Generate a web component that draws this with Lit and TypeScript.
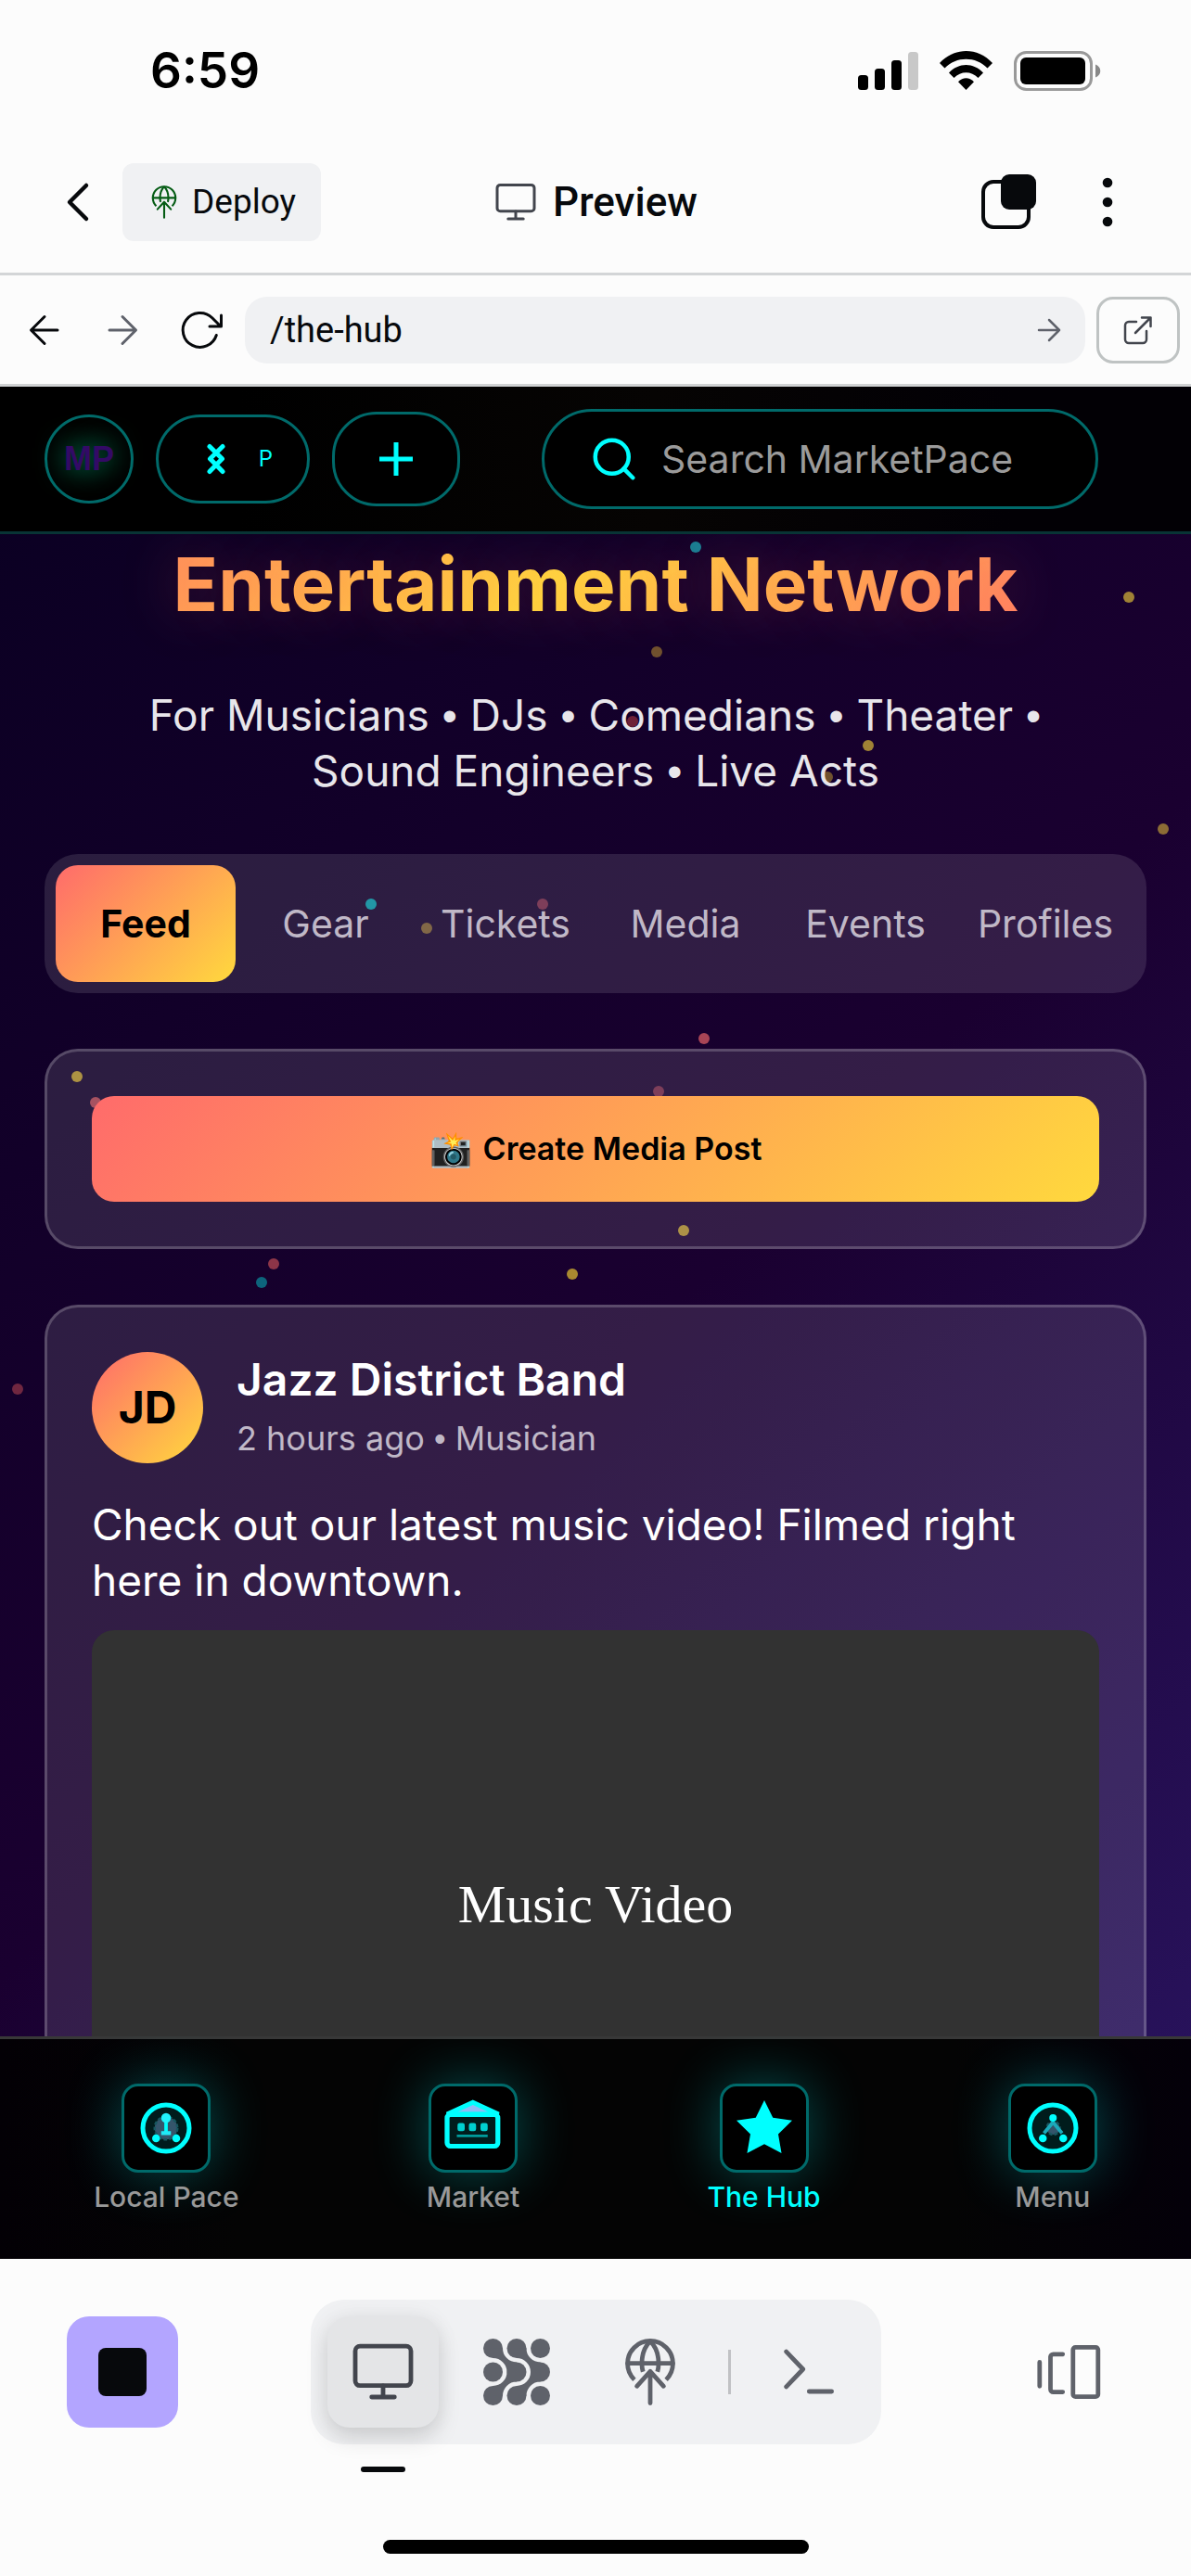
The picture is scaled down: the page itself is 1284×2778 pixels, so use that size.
import { LitElement, html, svg, css } from "lit";
import { customElement, state } from "lit/decorators.js";
import { classMap } from "lit/directives/class-map.js";

const base = css`
  :host,
  *,
  *::before,
  *::after {
    box-sizing: border-box;
  }
  button,
  input {
    margin: 0;
    padding: 0;
    border: 0;
    background: none;
    color: inherit;
    font: inherit;
  }
  a {
    color: inherit;
    text-decoration: none;
  }
  h1,
  h2,
  p {
    margin: 0;
  }
  svg {
    display: block;
    flex: none;
    overflow: visible;
  }
  .line {
    fill: none;
    stroke: currentColor;
    stroke-linecap: round;
    stroke-linejoin: round;
  }
`;

const monitor = (size: number, stroke: number) => html`
  <svg class="line" width=${size} height=${size} viewBox="0 0 24 24" stroke-width=${stroke} aria-hidden="true">
    <rect x="2" y="2.7" width="20" height="14.2" rx="1.7" />
    <path d="M12 17v4M7.9 21h8.2" />
  </svg>
`;

const globeUp = (size: number, stroke: number) => html`
  <svg class="line" width=${size} height=${size} viewBox="0 0 24 24" stroke-width=${stroke} aria-hidden="true">
    <path stroke-linecap="butt" d="M6.3 14.8A8.15 8.15 0 1 1 17.7 14.8" />
    <path d="M3.9 8.9h16.2" />
    <path stroke-linecap="butt" d="M12 .9C9.9 3 9 5.8 9 8.9c0 1 .1 2 .4 3M12 .9c2.1 2.1 3 4.9 3 8 0 1-.1 2-.4 3" />
    <path d="M12 23.2V11.8M7.2 17.1 12 11.8l4.8 5.3" />
  </svg>
`;

@customElement("device-status")
export class DeviceStatus extends LitElement {
  static styles = [
    base,
    css`
      :host {
        display: flex;
        align-items: center;
        justify-content: space-between;
        height: 141px;
        padding: 12px 96px 0 162px;
        color: #000;
        font: 600 53px/1 Inter, "Liberation Sans", sans-serif;
      }
      .icons {
        display: flex;
        align-items: center;
        gap: 23px;
      }
    `,
  ];

  render() {
    return html`
      <span>6:59</span>
      <div class="icons">
        <svg width="65" height="43" viewBox="0 0 65 43" role="img" aria-label="Signal">
          <rect x="0" y="26" width="11" height="16" rx="3.5" />
          <rect x="18" y="19" width="11" height="23" rx="3.5" />
          <rect x="36" y="10" width="11" height="32" rx="3.5" />
          <rect x="54" y="1" width="11" height="41" rx="3.5" fill="#c8c8c8" />
        </svg>
        <svg width="57" height="43" viewBox="0 0 57 43" role="img" aria-label="Wi-Fi">
          <path d="M0 13C16-4.3 41-4.3 57 13L51.5 18.5C39 5.5 18 5.5 5.5 18.5Z" />
          <path d="M10 23.5C20.5 12 36.5 12 47 23.5L41.5 29C34 21.2 23 21.2 15.5 29Z" />
          <path d="M20 33.3C25 28 32 28 37 33.3L28.5 42Z" />
        </svg>
        <svg width="95" height="43" viewBox="0 0 95 43" role="img" aria-label="Battery">
          <rect x="1.5" y="1.5" width="82" height="40" rx="12" fill="none" stroke="#999" stroke-width="3" />
          <rect x="7" y="7" width="70" height="29" rx="6" />
          <path d="M88 14.5c7 2.5 7 11.5 0 14Z" fill="#888" />
        </svg>
      </div>
    `;
  }
}

@customElement("browser-chrome")
export class BrowserChrome extends LitElement {
  static styles = [
    base,
    css`
      :host {
        display: block;
        color: #07090c;
        font: 400 37px/1 Roboto, "Noto Sans", sans-serif;
      }
      .title-bar {
        display: grid;
        grid-template-columns: 1fr auto 1fr;
        align-items: center;
        height: 156px;
        padding: 0 78px 0 60px;
        border-bottom: 3px solid #d3d5d7;
      }
      .group {
        display: flex;
        align-items: center;
        gap: 24px;
      }
      .group.end {
        justify-content: flex-end;
        gap: 64px;
      }
      .deploy {
        display: flex;
        align-items: center;
        gap: 12px;
        height: 84px;
        padding: 0 27px;
        border-radius: 12px;
        background: #f0f1f3;
      }
      .deploy svg {
        color: #055c14;
      }
      .title {
        display: flex;
        align-items: center;
        gap: 16px;
        padding-left: 18px;
        font-size: 44px;
        font-weight: 500;
      }
      .title svg {
        color: #42454d;
      }
      .address-bar {
        display: flex;
        align-items: center;
        gap: 12px;
        height: 120px;
        padding: 0 12px 0 24px;
        border-bottom: 3px solid #d0d2d3;
      }
      .nav {
        display: flex;
        gap: 36px;
        padding-right: 12px;
      }
      .muted {
        color: #5f626b;
      }
      .field {
        display: flex;
        flex: 1;
        align-items: center;
        height: 72px;
        padding: 0 24px 0 27px;
        border-radius: 24px;
        background: #f0f1f3;
      }
      .field input {
        flex: 1;
        min-width: 0;
        outline: none;
        font-size: 38px;
      }
      .open {
        display: grid;
        place-items: center;
        width: 90px;
        height: 72px;
        border: 3px solid #bfc3c3;
        border-radius: 18px;
        color: #42454d;
      }
    `,
  ];

  render() {
    return html`
      <header class="title-bar">
        <div class="group">
          <button aria-label="Back">
            <svg class="line" width="48" height="48" viewBox="0 0 48 48" stroke-width="4.5">
              <path d="M33 6 15 24l18 18" />
            </svg>
          </button>
          <button class="deploy">${globeUp(36, 1.4)} Deploy</button>
        </div>
        <div class="title">${monitor(48, 1.5)} <span>Preview</span></div>
        <div class="group end">
          <button aria-label="Tabs">
            <svg width="60" height="60" viewBox="0 0 60 60">
              <rect x="2" y="8" width="49" height="49" rx="11" fill="none" stroke="#07090c" stroke-width="4" />
              <rect x="21" y="0" width="38" height="38" rx="9" fill="#07090c" />
            </svg>
          </button>
          <button aria-label="More">
            <svg width="24" height="60" viewBox="0 0 24 60" fill="#07090c">
              <circle cx="12" cy="9" r="5.3" />
              <circle cx="12" cy="30" r="5.3" />
              <circle cx="12" cy="51" r="5.3" />
            </svg>
          </button>
        </div>
      </header>
      <div class="address-bar">
        <div class="nav">
          <button aria-label="Go back">
            <svg class="line" width="48" height="48" viewBox="0 0 48 48" stroke-width="3">
              <path d="M38 24H10M24 9.5 9.5 24 24 38.5" />
            </svg>
          </button>
          <button class="muted" aria-label="Go forward">
            <svg class="line" width="48" height="48" viewBox="0 0 48 48" stroke-width="3">
              <path d="M10 24h28M24 9.5 38.5 24 24 38.5" />
            </svg>
          </button>
          <button aria-label="Reload">
            <svg class="line" width="48" height="48" viewBox="0 0 48 48" stroke-width="3">
              <path d="M41.3 29.5A18.5 18.5 0 1 1 36.7 10.8L46 20M46.5 8v12H34" />
            </svg>
          </button>
        </div>
        <div class="field">
          <input type="text" aria-label="Address" .value=${"/the-hub"} />
          <button class="muted" aria-label="Go">
            <svg class="line" width="30" height="30" viewBox="0 0 30 30" stroke-width="2.5">
              <path d="M4 15h22M15 4l11 11-11 11" />
            </svg>
          </button>
        </div>
        <button class="open" aria-label="Open in new tab">
          <svg class="line" width="30" height="30" viewBox="0 0 30 30" stroke-width="2.5">
            <path d="M13 6H5a4 4 0 0 0-4 4v15a4 4 0 0 0 4 4h15a4 4 0 0 0 4-4v-9M19 1.5h9.5V11M28.5 1.5 12 18" />
          </svg>
        </button>
      </div>
    `;
  }
}

interface Particle {
  x: number;
  y: number;
  color: string;
}

// Offsets from the top left of the feed.
const particles: Particle[] = [
  { x: 744, y: 8, color: "#167f94" },
  { x: 1211, y: 62, color: "#a08235" },
  { x: 702, y: 121, color: "#70522f" },
  { x: 676, y: 196, color: "#6d2138" },
  { x: 930, y: 222, color: "#a08235" },
  { x: 886, y: 256, color: "#70522f" },
  { x: 1248, y: 312, color: "#8c6c35" },
  { x: 394, y: 393, color: "#068a9b" },
  { x: 579, y: 393, color: "#6e2645" },
  { x: 454, y: 419, color: "#715430" },
  { x: 753, y: 538, color: "#a84556" },
  { x: 77, y: 579, color: "#a3842b" },
  { x: 97, y: 607, color: "#9b3c4d" },
  { x: 704, y: 595, color: "#6e2645" },
  { x: 731, y: 745, color: "#a38430" },
  { x: 289, y: 781, color: "#8d3548" },
  { x: 276, y: 801, color: "#0d647c" },
  { x: 611, y: 792, color: "#a98930" },
  { x: 13, y: 916, color: "#702740" },
];

const tabs = ["Feed", "Gear", "Tickets", "Media", "Events", "Profiles"];

const audience = ["For Musicians", "DJs", "Comedians", "Theater", "Sound Engineers", "Live Acts"];

const navItems = [
  {
    label: "Local Pace",
    size: 60,
    art: svg`
      <circle cx="12" cy="12" r="10" fill="#001c1c" stroke="#0ff" stroke-width="2" />
      <circle cx="12" cy="12" r="4.9" fill="#34556b" stroke="#17565f" stroke-width="1" stroke-dasharray="1.5 .9" />
      <path d="M12 9v5" stroke="#0ff" stroke-width="1.5" />
      <rect x="9.9" y="13.3" width="4.2" height="1.7" fill="#21eaf7" />
      <circle cx="12" cy="7.6" r="2.1" fill="#21f2fb" />
      <circle cx="7.7" cy="16.4" r="1.7" fill="#0ff" />
      <circle cx="16.4" cy="16.4" r="1.7" fill="#0ff" />`,
  },
  {
    label: "Market",
    size: 60,
    art: svg`
      <path d="M.8 6 11.9.9 23 6Z" fill="#8fbcf5" stroke="#0ff" stroke-width="2" />
      <rect x=".8" y="6.1" width="21.9" height="13.7" rx="1.5" fill="#001c1c" stroke="#0ff" stroke-width="2.1" />
      <rect x="5.3" y="9.8" width="3.1" height="3.5" rx=".9" fill="#00d0d0" />
      <rect x="10.2" y="9.8" width="3.1" height="3.5" rx=".9" fill="#00d0d0" />
      <rect x="15.2" y="9.8" width="3.1" height="3.5" rx=".9" fill="#00d0d0" />
      <path d="M5 15.3h13.3" stroke="#009a9a" stroke-width="1.1" />`,
  },
  {
    label: "The Hub",
    size: 72,
    art: svg`
      <path
        fill="#0ff"
        d="m12 2 3.09 6.26L22 9.27l-5 4.87 1.18 6.88L12 17.77l-6.18 3.25L7 14.14 2 9.27l6.91-1.01Z"
      />`,
  },
  {
    label: "Menu",
    size: 60,
    art: svg`
      <circle cx="12" cy="12" r="10" fill="#001c1c" stroke="#0ff" stroke-width="2" />
      <circle cx="12.2" cy="12" r="2.8" fill="#34556b" stroke="#17565f" stroke-width="1" stroke-dasharray="1.5 .9" />
      <path d="M8.2 14.2 12.1 9.5l3.9 4.7" fill="none" stroke="#1ba9ba" stroke-width="1.5" />
      <circle cx="12.1" cy="7.6" r="1.6" fill="#0ff" />
      <circle cx="7.7" cy="16.4" r="1.7" fill="#0ff" />
      <circle cx="16.5" cy="16.4" r="1.7" fill="#0ff" />`,
  },
];

@customElement("hub-page")
export class HubPage extends LitElement {
  static styles = [
    base,
    css`
      :host {
        display: flex;
        flex-direction: column;
        background: linear-gradient(135deg, #0a0022 0%, #1a0030 52%, #2a1562 100%);
        color: #fff;
        font: 400 46px/60px Inter, "Liberation Sans", sans-serif;
      }
      .top {
        display: flex;
        align-items: center;
        gap: 24px;
        height: 159px;
        padding: 0 48px;
        border-bottom: 3px solid #083435;
        background: linear-gradient(90deg, #000 20%, #060403 55%, #020005 85%);
        color: #0ff;
      }
      .pill {
        display: flex;
        align-items: center;
        justify-content: center;
        height: 96px;
        border: 3px solid #006a6a;
        border-radius: 48px;
        background: #000;
      }
      .logo {
        width: 96px;
        color: #330a66;
        font: 700 36px/1 "Liberation Sans", sans-serif;
        text-shadow: 0 0 30px rgba(0, 220, 150, 0.8);
      }
      .partner {
        gap: 37px;
        width: 166px;
        padding-left: 16px;
        font-size: 24px;
      }
      .add {
        width: 138px;
        height: 102px;
      }
      .add svg {
        stroke-linecap: butt;
      }
      .search-slot {
        display: flex;
        flex: 1;
        justify-content: center;
        padding-left: 12px;
      }
      .search {
        gap: 24px;
        width: 100%;
        max-width: 600px;
        height: 108px;
        padding: 0 48px;
        border-radius: 54px;
      }
      .search input {
        flex: 1;
        min-width: 0;
        outline: none;
        font-size: 41px;
      }
      .search input::placeholder {
        color: #9b9b9b;
        opacity: 1;
      }
      .feed {
        position: relative;
        flex: 1;
        min-height: 0;
        overflow: hidden;
        padding: 6px 48px 0;
      }
      .particle {
        position: absolute;
        width: 12px;
        height: 12px;
        border-radius: 50%;
      }
      .content {
        position: relative;
        display: flex;
        flex-direction: column;
        gap: 60px;
      }
      .heading {
        padding-bottom: 3px;
        background: linear-gradient(135deg, #ff6b6b -68px, #ffd93d 420px, #ff6b6b 908px);
        background-clip: text;
        -webkit-background-clip: text;
        color: transparent;
        font-size: 80px;
        font-weight: 700;
        line-height: 96px;
        text-align: center;
        text-shadow: 0 0 60px rgba(255, 107, 107, 0.25);
      }
      .tagline {
        max-width: 1068px;
        margin: 0 auto;
        color: #e8e6eb;
        text-align: center;
      }
      .dot {
        font-family: "Liberation Sans", sans-serif;
        line-height: 1;
      }
      .tagline .dot {
        padding: 0 1px;
      }
      .tabs {
        display: flex;
        height: 150px;
        padding: 12px;
        border-radius: 36px;
        background: rgba(255, 255, 255, 0.115);
        color: #c0b8c7;
      }
      .tab {
        flex: 1;
        border-radius: 24px;
        font-size: 41px;
      }
      .tab.active {
        background: linear-gradient(135deg, #ff6b6b, #ffd93d);
        color: #000;
        font-weight: 700;
      }
      .card {
        padding: 48px;
        border: 3px solid rgba(255, 255, 255, 0.2);
        border-radius: 36px;
        background: rgba(255, 255, 255, 0.115);
      }
      .create {
        display: flex;
        align-items: center;
        justify-content: center;
        gap: 12px;
        width: 100%;
        height: 114px;
        border-radius: 24px;
        background: linear-gradient(135deg, #ff6b6b, #ffd93d);
        color: #000;
        font-size: 34px;
        font-weight: 600;
      }
      .camera {
        font-size: 37px;
      }
      .post {
        display: flex;
        flex-direction: column;
      }
      .author {
        display: flex;
        align-items: center;
        gap: 36px;
        padding-bottom: 36px;
      }
      .avatar {
        display: grid;
        place-items: center;
        width: 120px;
        height: 120px;
        border-radius: 50%;
        background: linear-gradient(135deg, #ff6b6b, #ffd93d);
        color: #000;
        font-size: 48px;
        font-weight: 700;
      }
      .name {
        font-size: 48px;
        font-weight: 600;
        line-height: 60px;
      }
      .meta {
        padding-top: 6px;
        color: #c0b8c7;
        font-size: 36px;
        line-height: 54px;
      }
      .video {
        display: grid;
        place-items: center;
        min-height: 600px;
        margin-top: 24px;
        padding-bottom: 8px;
        border-radius: 24px;
        background: #323232;
        font: 58px/66px "Liberation Serif", serif;
      }
      .bottom {
        display: flex;
        align-items: flex-start;
        justify-content: space-around;
        height: 240px;
        padding-top: 48px;
        border-top: 3px solid #383838;
        background: linear-gradient(90deg, #030005, #040404 20%, #040404 80%, #040009);
        color: #999;
        font-size: 30px;
        line-height: 36px;
      }
      .item {
        display: flex;
        flex-direction: column;
        align-items: center;
        gap: 8px;
        font-weight: 500;
      }
      .item.current {
        color: #0ff;
      }
      .tile {
        display: grid;
        place-items: center;
        width: 96px;
        height: 96px;
        border: 3px solid #006a6a;
        border-radius: 18px;
        background: #000;
        box-shadow: 0 0 60px rgba(0, 255, 255, 0.3);
      }
    `,
  ];

  @state() private tab = "Feed";

  render() {
    return html`
      <header class="top">
        <a class="pill logo" href="#home">MP</a>
        <button class="pill partner" aria-label="P">
          <svg class="line" width="18" height="32" viewBox="0 0 18 32" stroke-width="5" aria-hidden="true">
            <path d="M2 2.5 15.5 15.8 2 29.5M16 2.5 2.5 15.8 16 29.5" />
          </svg>
          <span>P</span>
        </button>
        <button class="pill add" aria-label="Add">
          <svg class="line" width="36" height="36" viewBox="0 0 36 36" stroke-width="5">
            <path d="M18 0v36M0 18h36" />
          </svg>
        </button>
        <div class="search-slot">
          <label class="pill search">
            <svg class="line" width="54" height="54" viewBox="0 0 24 24" stroke-width="2" aria-hidden="true">
              <circle cx="11" cy="11" r="8" />
              <path d="m21 21-4.35-4.35" />
            </svg>
            <input type="search" placeholder="Search MarketPace" aria-label="Search MarketPace" />
          </label>
        </div>
      </header>

      <main class="feed">
        ${particles.map(
          (p) => html`<i class="particle" style="left:${p.x}px;top:${p.y}px;background:${p.color}"></i>`
        )}
        <div class="content">
          <h1 class="heading">Entertainment Network</h1>
          <p class="tagline">
            ${audience.map((a, i) => (i === 0 ? a : html` <span class="dot">•</span> ${a}`))}
          </p>
          <nav class="tabs">
            ${tabs.map(
              (t) => html`
                <button class=${classMap({ tab: true, active: t === this.tab })} @click=${() => (this.tab = t)}>
                  ${t}
                </button>
              `
            )}
          </nav>
          <section class="card">
            <button class="create"><span class="camera">📸</span> <span>Create Media Post</span></button>
          </section>
          <article class="card post">
            <div class="author">
              <div class="avatar">JD</div>
              <div>
                <h2 class="name">Jazz District Band</h2>
                <p class="meta">2 hours ago <span class="dot">•</span> Musician</p>
              </div>
            </div>
            <p>Check out our latest music video! Filmed right here in downtown.</p>
            <div class="video">Music Video</div>
          </article>
        </div>
      </main>

      <nav class="bottom">
        ${navItems.map(
          (n) => html`
            <a class=${classMap({ item: true, current: n.label === "The Hub" })} href="#">
              <span class="tile">
                <svg width=${n.size} height=${n.size} viewBox="0 0 24 24" aria-hidden="true">${n.art}</svg>
              </span>
              <span>${n.label}</span>
            </a>
          `
        )}
      </nav>
    `;
  }
}

@customElement("tool-dock")
export class ToolDock extends LitElement {
  static styles = [
    base,
    css`
      :host {
        display: flex;
        flex-direction: column;
        align-items: center;
        justify-content: space-between;
        height: 342px;
        padding-bottom: 24px;
        color: #5f626a;
      }
      .row {
        display: flex;
        align-items: center;
        justify-content: space-between;
        width: 100%;
        padding: 44px 72px 0;
      }
      .key {
        position: relative;
        display: grid;
        place-items: center;
        width: 120px;
        height: 120px;
        border-radius: 24px;
      }
      .stop {
        background: #b3a5ff;
        color: #07090c;
      }
      .tools {
        display: flex;
        align-items: center;
        gap: 24px;
        padding: 18px;
        border-radius: 36px;
        background: #f0f1f3;
      }
      .key.active {
        background: #e4e5e7;
        box-shadow: 0 12px 24px rgba(0, 0, 0, 0.13), 0 0 24px rgba(0, 0, 0, 0.06);
        color: #42454d;
      }
      .key.active::after {
        content: "";
        position: absolute;
        top: 162px;
        left: 36px;
        width: 48px;
        height: 6px;
        border-radius: 3px;
        background: #07090c;
      }
      .divider {
        width: 3px;
        height: 48px;
        background: #c0c1c4;
      }
      .home {
        width: 459px;
        height: 15px;
        border-radius: 8px;
        background: #000;
      }
    `,
  ];

  render() {
    return html`
      <div class="row">
        <button class="key stop" aria-label="Stop">
          <svg width="52" height="52" viewBox="0 0 52 52"><rect width="52" height="52" rx="8" fill="#07090c" /></svg>
        </button>
        <div class="tools">
          <button class="key active" aria-label="Preview">${monitor(72, 1.6)}</button>
          <button class="key" aria-label="Agent">
            <svg width="72" height="72" viewBox="0 0 24 24" fill="currentColor">
              ${[3.5, 12, 20.5].map((cy) =>
                [3.5, 12, 20.5].map((cx) => svg`<circle cx=${cx} cy=${cy} r="3.5" />`)
              )}
              ${["", "translate(8.5 0)", "matrix(1 0 0 -1 0 24)", "matrix(1 0 0 -1 8.5 24)"].map(
                (t) => svg`
                  <path transform=${t} d="M7 3.5A5 5 0 0 0 12 8.5V12H8.5A5 5 0 0 0 3.5 7V3.5Z" />`
              )}
            </svg>
          </button>
          <button class="key" aria-label="Deployments">${globeUp(72, 1.6)}</button>
          <span class="divider"></span>
          <button class="key" aria-label="Shell">
            <svg class="line" width="72" height="72" viewBox="0 0 24 24" stroke-width="1.6">
              <path d="M3.9 4.7 9.9 11l-6 6.3M12.1 19h8.1" />
            </svg>
          </button>
        </div>
        <button class="key" aria-label="Switch pane">
          <svg class="line" width="72" height="72" viewBox="0 0 24 24" stroke-width="1.6">
            <path d="M1.6 8.5v8.6M9.9 5.6H6.5a1 1 0 0 0-1 1v11.6a1 1 0 0 0 1 1h3.4" />
            <rect x="13.6" y="3.1" width="9" height="17.8" rx=".9" />
          </svg>
        </button>
      </div>
      <div class="home"></div>
    `;
  }
}

@customElement("app-root")
export class AppRoot extends LitElement {
  static styles = css`
    :host {
      display: flex;
      flex-direction: column;
      height: 100vh;
      background: #fcfcfc;
    }
    .page {
      flex: 1;
      min-height: 0;
    }
  `;

  render() {
    return html`
      <device-status></device-status>
      <browser-chrome></browser-chrome>
      <hub-page class="page"></hub-page>
      <tool-dock></tool-dock>
    `;
  }
}
